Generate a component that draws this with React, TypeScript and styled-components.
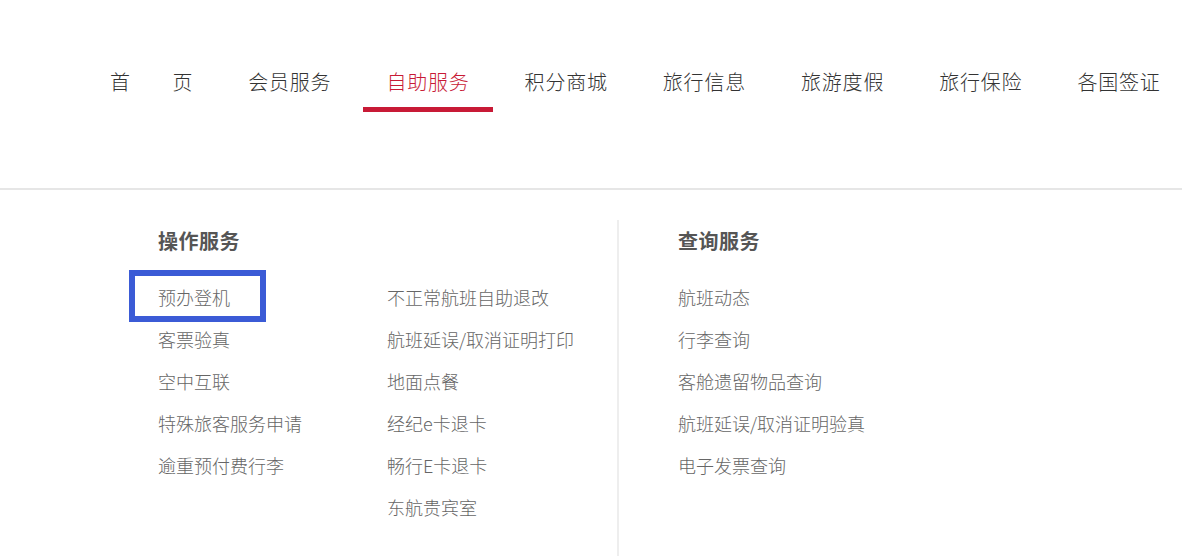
import { createGlobalStyle, styled, css } from "styled-components";

type TNavItem = { id: string; title: string; active?: boolean };
type TLink = { id: string; title: string; marked?: boolean };

const navItems: TNavItem[] = [
  { id: "home", title: "首\u3000\u3000页" },
  { id: "member", title: "会员服务" },
  { id: "self", title: "自助服务", active: true },
  { id: "points", title: "积分商城" },
  { id: "info", title: "旅行信息" },
  { id: "holiday", title: "旅游度假" },
  { id: "insurance", title: "旅行保险" },
  { id: "visa", title: "各国签证" },
];

const operateCols: TLink[][] = [
  [
    { id: "checkin", title: "预办登机", marked: true },
    { id: "ticket", title: "客票验真" },
    { id: "wifi", title: "空中互联" },
    { id: "special", title: "特殊旅客服务申请" },
    { id: "baggage", title: "逾重预付费行李" },
  ],
  [
    { id: "refund", title: "不正常航班自助退改" },
    { id: "print", title: "航班延误/取消证明打印" },
    { id: "meal", title: "地面点餐" },
    { id: "ecard", title: "经纪e卡退卡" },
    { id: "Ecard", title: "畅行E卡退卡" },
    { id: "lounge", title: "东航贵宾室" },
  ],
];

const queryLinks: TLink[] = [
  { id: "status", title: "航班动态" },
  { id: "luggage", title: "行李查询" },
  { id: "lost", title: "客舱遗留物品查询" },
  { id: "verify", title: "航班延误/取消证明验真" },
  { id: "invoice", title: "电子发票查询" },
];

const GlobalStyle = createGlobalStyle`
  html, body {
    margin: 0;
    padding: 0;
    background: #fff;
    font-family: "Liberation Sans", "Noto Sans CJK SC", sans-serif;
  }
  * {
    box-sizing: border-box;
  }
`;

export default function App() {
  return (
    <>
      <GlobalStyle />
      <Page>
        <Header>
          <Nav>
            {navItems.map((item) => (
              <NavItem key={item.id} $active={item.active}>
                {item.title}
              </NavItem>
            ))}
          </Nav>
        </Header>
        <Panel>
          <Section $width={459}>
            <GroupTitle>操作服务</GroupTitle>
            <Columns>
              {operateCols.map((col, i) => (
                <Column key={i}>
                  {col.map((link) => (
                    <SubLink key={link.id}>
                      {link.title}
                      {link.marked && <Highlight />}
                    </SubLink>
                  ))}
                </Column>
              ))}
            </Columns>
          </Section>
          <Divider />
          <Section $pad={59}>
            <GroupTitle>查询服务</GroupTitle>
            <Column>
              {queryLinks.map((link) => (
                <SubLink key={link.id}>{link.title}</SubLink>
              ))}
            </Column>
          </Section>
        </Panel>
      </Page>
    </>
  );
}

const Page = styled.div`
  min-height: 100vh;
  display: flex;
  flex-direction: column;
`;

const Header = styled.header`
  height: 190px;
  border-bottom: 2px solid #e6e6e6;
  padding-top: 67px;
`;

const Nav = styled.nav`
  display: flex;
  gap: 9px;
  padding-left: 87px;
`;

const NavItem = styled.a<{ $active?: boolean }>`
  display: block;
  padding: 0 23px 10px;
  line-height: 30px;
  font-family: "Noto Sans CJK SC", sans-serif;
  font-size: 20px;
  font-weight: 300;
  letter-spacing: 0.8px;
  color: #333;
  white-space: nowrap;
  border-bottom: 5px solid transparent;
  cursor: pointer;

  ${({ $active }) =>
    $active &&
    css`
      color: #c81a36;
      border-bottom-color: #c81a36;
    `}
`;

const Panel = styled.div`
  flex: 1;
  display: flex;
  padding-top: 30px;
`;

const Section = styled.div<{ $width?: number; $pad?: number }>`
  padding-left: ${({ $pad }) => $pad ?? 158}px;
  padding-top: 6px;
  ${({ $width }) =>
    $width &&
    css`
      width: ${$width + 158}px;
    `}
`;

const Divider = styled.div`
  width: 2px;
  background: #eeeeee;
`;

const GroupTitle = styled.h3`
  margin: 0 0 20px;
  line-height: 30px;
  font-family: "Noto Sans CJK SC", sans-serif;
  font-size: 20px;
  font-weight: 700;
  letter-spacing: 0.5px;
  color: #555;
`;

const Columns = styled.div`
  display: grid;
  grid-template-columns: 229px 1fr;
`;

const Column = styled.div`
  display: flex;
  flex-direction: column;
`;

const SubLink = styled.a`
  position: relative;
  width: max-content;
  line-height: 42px;
  font-family: "Noto Sans CJK SC", sans-serif;
  font-size: 18px;
  font-weight: 300;
  color: #666;
  cursor: pointer;
`;

const Highlight = styled.span`
  position: absolute;
  left: -29px;
  top: -6px;
  width: 137px;
  height: 52px;
  border: 6px solid #3b5bd6;
  pointer-events: none;
`;
